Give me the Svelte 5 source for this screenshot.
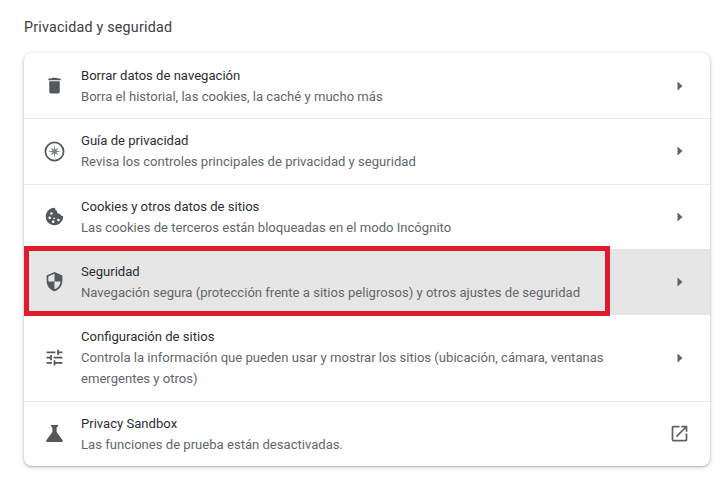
<script>
  const rows = [
    { icon: 'trash', title: 'Borrar datos de navegación', sub: 'Borra el historial, las cookies, la caché y mucho más' },
    { icon: 'compass', title: 'Guía de privacidad', sub: 'Revisa los controles principales de privacidad y seguridad' },
    { icon: 'cookie', title: 'Cookies y otros datos de sitios', sub: 'Las cookies de terceros están bloqueadas en el modo Incógnito' },
    { icon: 'shield', title: 'Seguridad', sub: 'Navegación segura (protección frente a sitios peligrosos) y otros ajustes de seguridad', active: true },
    { icon: 'tune', title: 'Configuración de sitios', sub: 'Controla la información que pueden usar y mostrar los sitios (ubicación, cámara, ventanas emergentes y otros)', tall: true },
    { icon: 'flask', title: 'Privacy Sandbox', sub: 'Las funciones de prueba están desactivadas.', external: true }
  ];
</script>

<main class="page">
  <h2 class="heading">Privacidad y seguridad</h2>
  <section class="card">
    {#each rows as row}
      <div class="row" class:active={row.active} class:tall={row.tall}>
        <svg class="icon" viewBox={row.icon === 'flask' ? '2 2 20 20' : '0 0 24 24'} aria-hidden="true">
          {#if row.icon === 'trash'}
            <path d="M6 19c0 1.100.9 2 2 2h8c1.100 0 2-.9 2-2V7H6v12zM19 4h-3.500l-1-1h-5l-1 1H5v2h14V4z" />
          {:else if row.icon === 'compass'}
            <path fill-rule="evenodd" d="M12 .6a11.400 11.400 0 1 0 0 22.800 11.400 11.400 0 0 0 0-22.800zm0 2a9.400 9.400 0 1 1 0 18.800 9.400 9.400 0 0 1 0-18.800z" />
            <path class="star" d="M12 4.500l.8 5.300 3.900-2.500-2.500 3.900 5.300.8-5.300.8 2.500 3.900-3.900-2.500-.8 5.300-.8-5.300-3.900 2.500 2.500-3.900-5.300-.8 5.300-.8-2.500-3.900 3.900 2.500z" />
          {:else if row.icon === 'cookie'}
            <path fill-rule="evenodd" d="M21.900 11.400c-1.700.2-3-.6-3.400-2.200-1.700.3-3.300-.8-3.600-2.500-.1-.5-.1-.9 0-1.300C13.500 5.200 12.400 3.800 12.500 2 6.500 1.700 2 6.500 2 12c0 5.500 4.500 10 10 10s10.100-4.700 9.900-10.600zM8.500 7a1.500 1.500 0 1 1 0 3 1.500 1.500 0 0 1 0-3zm-2 5a1.500 1.500 0 1 1 0 3 1.500 1.500 0 0 1 0-3zm5 1a1 1 0 1 1 0 2 1 1 0 0 1 0-2zm-1 3.500a1.500 1.500 0 1 1 0 3 1.500 1.500 0 0 1 0-3zm6-2a1.500 1.500 0 1 1 0 3 1.500 1.500 0 0 1 0-3z" />
          {:else if row.icon === 'shield'}
            <path fill-rule="evenodd" d="M12 1 3 5v6c0 5.550 3.840 10.740 9 12 5.160-1.260 9-6.450 9-12V5l-9-4zm0 10.990h7c-.53 4.120-3.280 7.790-7 8.940V12H5V6.300l7-3.110v8.800z" />
          {:else if row.icon === 'tune'}
            <path d="M3 17v2h6v-2H3zM3 5v2h10V5H3zm10 16v-2h8v-2h-8v-2h-2v6h2zM7 9v2H3v2h4v2h2V9H7zm14 4v-2H11v2h10zm-6-4h2V7h4V5h-4V3h-2v6z" />
          {:else}
            <path d="M19.800 18.400 14 10.670V6.500l1.350-1.690c.26-.33.03-.81-.39-.81H9.040c-.42 0-.65.48-.39.81L10 6.500v4.170L4.200 18.400c-.49.660-.02 1.600.8 1.600h14c.82 0 1.290-.94.800-1.600z" />
          {/if}
        </svg>
        <div class="text">
          <div class="title">{row.title}</div>
          <div class="sub">{row.sub}</div>
        </div>
        {#if row.external}
          <svg class="open" viewBox="0 0 24 24" aria-hidden="true">
            <path d="M19 19H5V5h7V3H5a2 2 0 0 0-2 2v14a2 2 0 0 0 2 2h14c1.100 0 2-.9 2-2v-7h-2v7zM14 3v2h3.590l-9.830 9.830 1.410 1.410L19 6.410V10h2V3h-7z" />
          </svg>
        {:else}
          <svg class="arrow" viewBox="0 0 8 12" aria-hidden="true"><path d="M1.500 1.500 6.500 6l-5 4.500z" /></svg>
        {/if}
        {#if row.active}
          <div class="highlight"></div>
        {/if}
      </div>
    {/each}
  </section>
</main>

<style>
  :global(body) {
    background: #fff;
    font-family: Roboto, "Liberation Sans", sans-serif;
  }

  .page {
    height: 477px;
    box-sizing: border-box;
    padding: 18px 10px 0 24px;
    overflow: hidden;
  }

  .heading {
    margin: 0 0 17px;
    font-size: 14.3px;
    line-height: 18px;
    font-weight: 400;
    letter-spacing: 0.2px;
    color: #3c4043;
  }

  .card {
    border-radius: 8px;
    background: #fff;
    box-shadow: 0 1px 2px rgba(60, 64, 67, 0.3), 0 1px 4px 1px rgba(60, 64, 67, 0.15);
  }

  .row {
    position: relative;
    display: flex;
    align-items: center;
    height: 65.33px;
    box-sizing: border-box;
    padding: 0 20px;
    border-top: 1px solid #e8e8e8;
  }

  .row:first-child {
    border-top: none;
  }

  .row:last-child {
    height: 65px;
  }

  .row.active {
    height: 66px;
    border-top: none;
    background: #e6e6e6;
  }

  .row.tall {
    height: 86px;
    border-top: none;
  }

  .icon {
    width: 21px;
    height: 21px;
    fill: #54585c;
    flex: none;
    margin-right: 16px;
  }

  .star {
    opacity: 0.75;
  }

  .text {
    flex: 1;
    min-width: 0;
    padding: 1px 60px 0 0;
  }

  .title {
    font-size: 13.08px;
    line-height: 20px;
    color: #2b2d30;
  }

  .sub {
    font-size: 13.08px;
    line-height: 21px;
    color: #62666a;
  }

  .arrow {
    width: 8px;
    height: 12px;
    fill: #5f6368;
    flex: none;
    margin-right: 6px;
  }

  .open {
    width: 21px;
    height: 21px;
    fill: #5f6368;
    flex: none;
    margin-left: -6px;
  }

  .highlight {
    position: absolute;
    left: 0;
    top: -3px;
    width: 586px;
    height: 70px;
    box-sizing: border-box;
    border: 5px solid #e01b2d;
    pointer-events: none;
  }
</style>
